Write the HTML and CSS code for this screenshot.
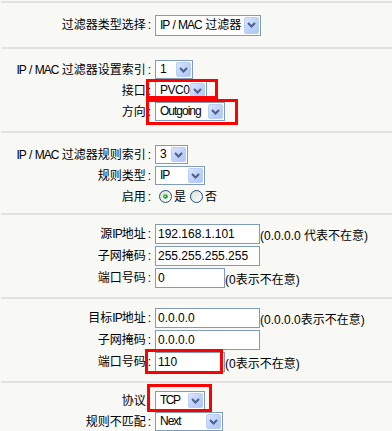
FILE: index.html
```html
<!DOCTYPE html>
<html>
<head>
<meta charset="utf-8">
<link rel="stylesheet" href="styles.css">
</head>
<body>
<div class="page">
  <div class="sep"></div>
  <div class="sec s1">
    <div class="row r44">
      <div class="lbl">过滤器类型选择<span class="colon">:</span></div>
      <div class="sel tall w106"><span class="val"><span class="lt">IP / MAC </span>过滤器</span><span class="arr"><svg width="9" height="6" viewBox="0 0 9 6"><polyline points="1,1 4.5,4.5 8,1" fill="none" stroke="#4d6185" stroke-width="2"/></svg></span></div>
    </div>
  </div>
  <div class="sep"></div>
  <div class="sec s2">
    <div class="row r21">
      <div class="lbl"><span class="lt">IP / MAC </span>过滤器设置索引<span class="colon">:</span></div>
      <div class="sel w38"><span class="val">1</span><span class="arr"><svg width="9" height="6" viewBox="0 0 9 6"><polyline points="1,1 4.5,4.5 8,1" fill="none" stroke="#4d6185" stroke-width="2"/></svg></span></div>
    </div>
    <div class="row r21">
      <div class="lbl">接口<span class="colon">:</span></div>
      <div class="sel w52"><span class="val"><span class="lh">PVC0</span></span><span class="arr"><svg width="9" height="6" viewBox="0 0 9 6"><polyline points="1,1 4.5,4.5 8,1" fill="none" stroke="#4d6185" stroke-width="2"/></svg></span></div>
    </div>
    <div class="row r21">
      <div class="lbl">方向<span class="colon">:</span></div>
      <div class="sel w70"><span class="val"><span class="lt">Outgoing</span></span><span class="arr"><svg width="9" height="6" viewBox="0 0 9 6"><polyline points="1,1 4.5,4.5 8,1" fill="none" stroke="#4d6185" stroke-width="2"/></svg></span></div>
    </div>
  </div>
  <div class="sep"></div>
  <div class="sec s3">
    <div class="row r21">
      <div class="lbl"><span class="lt">IP / MAC </span>过滤器规则索引<span class="colon">:</span></div>
      <div class="sel w33"><span class="val">3</span><span class="arr"><svg width="9" height="6" viewBox="0 0 9 6"><polyline points="1,1 4.5,4.5 8,1" fill="none" stroke="#4d6185" stroke-width="2"/></svg></span></div>
    </div>
    <div class="row r21">
      <div class="lbl">规则类型<span class="colon">:</span></div>
      <div class="sel w50"><span class="val"><span class="lt">IP</span></span><span class="arr"><svg width="9" height="6" viewBox="0 0 9 6"><polyline points="1,1 4.5,4.5 8,1" fill="none" stroke="#4d6185" stroke-width="2"/></svg></span></div>
    </div>
    <div class="row r21">
      <div class="lbl">启用<span class="colon">:</span></div>
      <div class="radios">
        <svg class="radio" width="13" height="13" viewBox="0 0 13 13"><defs><linearGradient id="rg1" x1="0" y1="0" x2="1" y2="1"><stop offset="0" stop-color="#dcdcd5"/><stop offset="1" stop-color="#ffffff"/></linearGradient></defs><circle cx="6.5" cy="6.5" r="6" fill="url(#rg1)" stroke="#1c5180" stroke-width="1"/><circle cx="6.5" cy="6.5" r="2.3" fill="#21a121"/><circle cx="6.2" cy="6.2" r="1" fill="#7fdc7f"/></svg><span class="rtxt">是</span>
        <svg class="radio" width="13" height="13" viewBox="0 0 13 13"><defs><linearGradient id="rg2" x1="0" y1="0" x2="1" y2="1"><stop offset="0" stop-color="#dcdcd5"/><stop offset="1" stop-color="#ffffff"/></linearGradient></defs><circle cx="6.5" cy="6.5" r="6" fill="url(#rg2)" stroke="#1c5180" stroke-width="1"/></svg><span class="rtxt">否</span>
      </div>
    </div>
  </div>
  <div class="sep"></div>
  <div class="sec s4">
    <div class="row r22">
      <div class="lbl">源<span class="lt">IP</span>地址<span class="colon">:</span></div>
      <div class="inp w105">192.168.1.101</div><span class="hint">(0.0.0.0 代表不在意)</span>
    </div>
    <div class="row r22">
      <div class="lbl">子网掩码<span class="colon">:</span></div>
      <div class="inp w105">255.255.255.255</div>
    </div>
    <div class="row r22">
      <div class="lbl">端口号码<span class="colon">:</span></div>
      <div class="inp w70">0</div><span class="hint">(0表示不在意)</span>
    </div>
  </div>
  <div class="sep"></div>
  <div class="sec s4">
    <div class="row r22">
      <div class="lbl">目标<span class="lt">IP</span>地址<span class="colon">:</span></div>
      <div class="inp w105">0.0.0.0</div><span class="hint">(0.0.0.0表示不在意)</span>
    </div>
    <div class="row r22">
      <div class="lbl">子网掩码<span class="colon">:</span></div>
      <div class="inp w105">0.0.0.0</div>
    </div>
    <div class="row r22">
      <div class="lbl">端口号码<span class="colon">:</span></div>
      <div class="inp w70">110</div><span class="hint">(0表示不在意)</span>
    </div>
  </div>
  <div class="sep"></div>
  <div class="sec s6">
    <div class="row r21">
      <div class="lbl">协议<span class="colon">:</span></div>
      <div class="sel w50"><span class="val"><span class="lt2">TCP</span></span><span class="arr"><svg width="9" height="6" viewBox="0 0 9 6"><polyline points="1,1 4.5,4.5 8,1" fill="none" stroke="#4d6185" stroke-width="2"/></svg></span></div>
    </div>
    <div class="row r21">
      <div class="lbl">规则不匹配<span class="colon">:</span></div>
      <div class="sel w68"><span class="val"><span class="lt">Next</span></span><span class="arr"><svg width="9" height="6" viewBox="0 0 9 6"><polyline points="1,1 4.5,4.5 8,1" fill="none" stroke="#4d6185" stroke-width="2"/></svg></span></div>
    </div>
  </div>

  <div class="mark m1"></div>
  <div class="mark m2"></div>
  <div class="mark m3"></div>
  <div class="mark m4"></div>
</div>
</body>
</html>
```
FILE: styles.css
```css
html, body {
  margin: 0;
  padding: 0;
  background: #f8f8f5;
}
body {
  font-family: "Liberation Sans", Arial, "Noto Sans CJK SC", sans-serif;
  font-size: 12px;
  color: #000;
}
.page {
  position: relative;
  width: 392px;
  height: 431px;
  overflow: hidden;
  padding-top: 1px;
  box-sizing: border-box;
}
.sep {
  height: 2px;
  margin-left: 1px;
  background: #e2e2e0;
}
.sec { box-sizing: border-box; }
.s1 { height: 44px; }
.s2 { height: 82px; padding-top: 10px; }
.s3 { height: 80px; padding-top: 11px; }
.s4 { height: 82px; padding-top: 8px; }
.s6 { height: 60px; padding-top: 7px; }

.row {
  display: flex;
  align-items: center;
}
.r44 { height: 44px; }
.r21 { height: 21px; }
.r22 { height: 22px; }

.lbl {
  flex: none;
  width: 151px;
  margin-right: 4px;
  text-align: right;
  white-space: nowrap;
  line-height: 14px;
}
.colon { margin-left: 2px; }
.lt { letter-spacing: -1px; word-spacing: 1px; }
.lt2 { letter-spacing: -1.5px; }
.lh { letter-spacing: -0.5px; }

.sel {
  flex: none;
  box-sizing: border-box;
  height: 19px;
  border: 1px solid #7f9db9;
  background: #fff;
  padding: 1px;
  display: flex;
  align-items: stretch;
}
.sel.tall { height: 21px; }
.val {
  flex: 1;
  padding-left: 3px;
  line-height: 15px;
  white-space: nowrap;
  overflow: hidden;
}
.tall .val { line-height: 17px; }
.arr {
  flex: none;
  width: 15px;
  box-sizing: border-box;
  border: 1px solid #b9cdf9;
  border-radius: 2px;
  background: linear-gradient(135deg, #dbe6fe 0%, #c0d3fb 50%, #aec5f5 100%);
  display: flex;
  align-items: center;
  justify-content: center;
}
.w106 { width: 106px; }
.w38 { width: 38px; }
.w52 { width: 52px; }
.w70 { width: 70px; }
.w33 { width: 33px; }
.w50 { width: 50px; }
.w68 { width: 68px; }
.w105 { width: 105px; }

.inp {
  flex: none;
  box-sizing: border-box;
  height: 20px;
  border: 1px solid #7f9db9;
  background: #fff;
  padding-left: 2px;
  line-height: 18px;
  white-space: nowrap;
}
.hint {
  align-self: flex-end;
  line-height: 14px;
  margin-bottom: 2px;
  white-space: nowrap;
}

.radios {
  display: flex;
  align-items: center;
  padding-left: 4px;
}
.radio { flex: none; display: block; }
.rtxt { margin: 0 4px 0 2px; line-height: 14px; }

.mark {
  position: absolute;
  box-sizing: border-box;
  border: 3px solid #ff0000;
}
.m1 { left: 146px; top: 79px; width: 72px; height: 20px; }
.m2 { left: 146px; top: 99px; width: 92px; height: 26px; }
.m3 { left: 145px; top: 349px; width: 78px; height: 25px; }
.m4 { left: 147px; top: 384px; width: 65px; height: 28px; }
```
